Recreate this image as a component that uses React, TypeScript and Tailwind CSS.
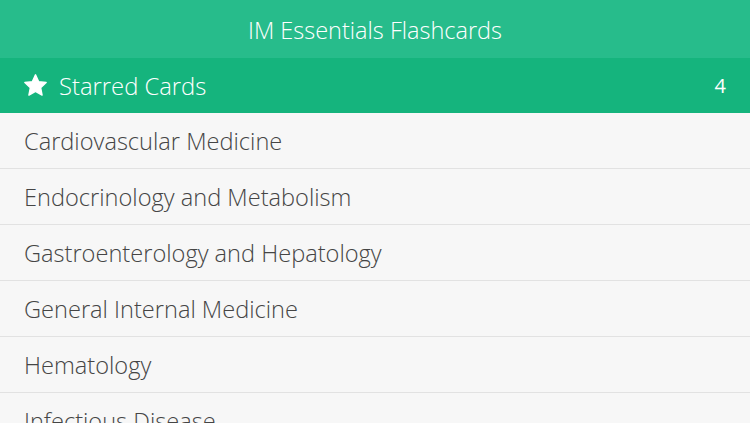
import React from 'react';

const CATEGORIES = [
  'Cardiovascular Medicine',
  'Endocrinology and Metabolism',
  'Gastroenterology and Hepatology',
  'General Internal Medicine',
  'Hematology',
  'Infectious Disease',
];

function StarIcon() {
  return (
    <svg viewBox="0 0 24 24" className="h-[25px] w-[25px]" fill="white">
      <path
        d="M12 1.8l3.05 6.55 7.15.85-5.3 4.9 1.4 7.1L12 17.6l-6.3 3.6 1.4-7.1-5.3-4.9 7.15-.85z"
        stroke="white"
        strokeWidth="1.4"
        strokeLinejoin="round"
      />
    </svg>
  );
}

export default function App() {
  return (
    <div
      className="h-[423px] w-[750px] overflow-hidden bg-[#f7f7f7]"
      style={{ fontFamily: '"Open Sans", "Noto Sans", sans-serif' }}
    >
      {/* Header */}
      <div className="flex h-[58px] items-center justify-center bg-[#27bc8b] pt-[3px]">
        <h1 className="text-[23.5px] font-light text-white">IM Essentials Flashcards</h1>
      </div>

      {/* Starred */}
      <div className="flex h-[55px] items-center justify-between bg-[#15b47d] pl-[23px] pr-[24px] text-white">
        <div className="flex items-center gap-[11px]">
          <StarIcon />
          <span className="pt-[2px] text-[23.8px] font-light">Starred Cards</span>
        </div>
        <span className="pt-[1px] text-[20px] font-normal">4</span>
      </div>

      {/* Categories */}
      <ul>
        {CATEGORIES.map((name) => (
          <li
            key={name}
            className="flex h-[56px] items-center border-b border-[#e2e2e2] pl-[24px] pt-[2px] text-[23.6px] font-light text-[#454545]"
          >
            {name}
          </li>
        ))}
      </ul>
    </div>
  );
}
